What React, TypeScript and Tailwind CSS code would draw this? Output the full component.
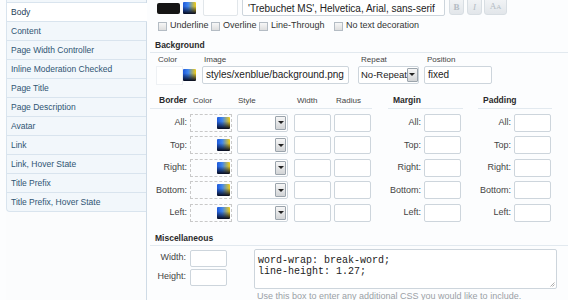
const navItems = [
  "Body",
  "Content",
  "Page Width Controller",
  "Inline Moderation Checked",
  "Page Title",
  "Page Description",
  "Avatar",
  "Link",
  "Link, Hover State",
  "Title Prefix",
  "Title Prefix, Hover State",
];

const sides = ["All:", "Top:", "Right:", "Bottom:", "Left:"];

const Picker = () => (
  <span className="block w-[13px] h-[12px] rounded-[1px] bg-[image:linear-gradient(180deg,transparent_35%,#050a1e_100%),linear-gradient(90deg,#1e58d8_0%,#3f86f0_40%,#f2cc10_100%)]" />
);

const Input = ({ className, children }: { className: string; children?: React.ReactNode }) => (
  <div
    className={`${className} h-[18px] border border-[#cdd5dc] rounded-[2px] bg-white flex items-center pl-[3px] text-[10px] text-[#222] whitespace-nowrap overflow-hidden`}
  >
    {children}
  </div>
);

const Select = ({ className, value }: { className: string; value?: string }) => (
  <div
    className={`${className} h-[18px] border border-[#cdd5dc] rounded-[2px] bg-white flex items-center justify-between pl-[2px] pr-px text-[9.5px] text-[#222] whitespace-nowrap`}
  >
    <span>{value}</span>
    <span className="shrink-0 w-[11px] h-[14px] border border-[#9ba4ac] rounded-[1px] bg-[linear-gradient(#f6f6f6,#d2d4d6)] flex items-center justify-center">
      <span className="w-0 h-0 border-l-[3px] border-r-[3px] border-t-[3px] border-l-transparent border-r-transparent border-t-[#222]" />
    </span>
  </div>
);

const Check = ({ className, label }: { className: string; label: string }) => (
  <div className={`${className} flex items-center gap-[3px]`}>
    <span className="w-[9px] h-[9px] border border-[#b4bcc4] bg-[linear-gradient(#f7f7f7,#dedede)]" />
    <span>{label}</span>
  </div>
);

const Heading = ({ children, className }: { children: React.ReactNode; className: string }) => (
  <div className={`${className} h-[15px] border-b border-[#e2e9ef] flex items-center text-[8.5px] font-bold text-[#2a2a2a]`}>
    {children}
  </div>
);

const Sidebar = () => (
  <aside className="w-[147px] shrink-0 pl-[6px] h-[300px]">
    <div className="h-full border-r border-[#cfdbe6] bg-[#fbfcfd]">
      <div className="h-[3px] border-l border-b border-[#d9e4ee] bg-[#f2f7fb]" />
      {navItems.map((item, i) => (
        <div
          key={item}
          className={
            i === 0
              ? "h-[19px] flex items-center pl-[4px] border-l border-b border-[#d9e4ee] bg-white -mr-px text-[8.5px] text-[#1e3e58]"
              : i === navItems.length - 1
                ? "h-[19px] flex items-center pl-[4px] border-l border-b border-[#d9e4ee] bg-[#f2f7fb] rounded-bl-[4px] text-[8.5px] text-[#2f5573]"
                : "h-[19px] flex items-center pl-[4px] border-l border-b border-[#d9e4ee] bg-[#f2f7fb] text-[8.5px] text-[#2f5573]"
          }
        >
          {item}
        </div>
      ))}
    </div>
  </aside>
);

export default function App() {
  return (
    <div className="w-[568px] h-[300px] overflow-hidden flex bg-[#fcfdfe] font-['Liberation_Sans',Arial,sans-serif] text-[9px] text-[#444]">
      <Sidebar />
      <main className="flex-1 flex flex-col">
        {/* font row */}
        <div className="-mt-[3px] h-[19px] flex items-start">
          <span className="ml-[10px] mt-[6px] w-[23px] h-[11px] rounded-[2px] bg-[#141414]" />
          <span className="ml-[3px] mt-[5px]">
            <Picker />
          </span>
          <div className="ml-[7px] w-[35px] h-[19px] border border-[#e1e6ea] rounded-[2px] bg-white" />
          <div className="ml-[4px] w-[203px] h-[19px] border border-[#cdd5dc] rounded-[2px] bg-white flex items-center pt-[3px] pl-[5px] text-[10px] text-[#222] whitespace-nowrap overflow-hidden">
            'Trebuchet MS', Helvetica, Arial, sans-serif
          </div>
          <div className="ml-[4px] w-[15px] h-[18px] border border-[#d8dee3] rounded-[3px] bg-[linear-gradient(#f3f5f7,#e2e6ea)] flex items-center justify-center pt-[3px] font-['Liberation_Serif',serif] font-bold text-[9px] text-[#b4bcc4]">
            B
          </div>
          <div className="ml-[3px] w-[15px] h-[18px] border border-[#d8dee3] rounded-[3px] bg-[linear-gradient(#f3f5f7,#e2e6ea)] flex items-center justify-center pt-[3px] font-['Liberation_Serif',serif] italic text-[9px] text-[#b4bcc4]">
            I
          </div>
          <div className="ml-[2px] w-[23px] h-[18px] border border-[#d8dee3] rounded-[3px] bg-[linear-gradient(#f3f5f7,#e2e6ea)] flex items-end justify-center pb-[3px] font-['Liberation_Serif',serif] text-[#b4bcc4]">
            <span className="text-[9px] leading-none">A</span>
            <span className="text-[7px] leading-none">A</span>
          </div>
        </div>

        {/* decoration row */}
        <div className="mt-[4px] h-[12px] flex items-center text-[#333]">
          <Check className="ml-[11px] w-[53px]" label="Underline" />
          <Check className="w-[48px]" label="Overline" />
          <Check className="w-[75px]" label="Line-Through" />
          <Check className="" label="No text decoration" />
        </div>

        <Heading className="mt-[7px] ml-[3px] pl-[5px]">Background</Heading>

        <div className="mt-[1px] flex items-start">
          <div className="ml-[9px] flex flex-col">
            <span className="h-[12px] flex items-center pl-[2px] text-[8px]">Color</span>
            <div className="flex items-center">
              <span className="w-[27px] h-[19px] border border-[#eef1f4] bg-white" />
              <Picker />
            </div>
          </div>
          <div className="ml-[6px] flex flex-col">
            <span className="h-[12px] flex items-center pl-[2px] text-[8px]">Image</span>
            <Input className="w-[147px]">styles/xenblue/background.png</Input>
          </div>
          <div className="ml-[9px] flex flex-col">
            <span className="h-[12px] flex items-center pl-[3px] text-[8px]">Repeat</span>
            <Select className="w-[61px]" value="No-Repeat" />
          </div>
          <div className="ml-[5px] flex flex-col">
            <span className="h-[12px] flex items-center pl-[3px] text-[8px]">Position</span>
            <Input className="w-[68px]">fixed</Input>
          </div>
        </div>

        {/* border / margin / padding */}
        <div className="mt-[9px] flex items-start">
          <div className="ml-[3px] w-[222px]">
            <Heading className="pl-[9px]">
              <span className="w-[34px]">Border</span>
              <span className="w-[45px] font-normal text-[8px] text-[#444]">Color</span>
              <span className="w-[59px] font-normal text-[8px] text-[#444]">Style</span>
              <span className="w-[39px] font-normal text-[8px] text-[#444]">Width</span>
              <span className="font-normal text-[8px] text-[#444]">Radius</span>
            </Heading>
            <div className="mt-[5px] flex flex-col gap-[4.5px]">
              {sides.map((s) => (
                <div key={s} className="h-[18px] flex items-center">
                  <span className="w-[37px] text-right">{s}</span>
                  <div className="ml-[3px] w-[42px] h-[18px] border border-dashed border-[#c9c9c9] flex items-center justify-end pr-px">
                    <Picker />
                  </div>
                  <Select className="ml-[5px] w-[51px]" />
                  <Input className="ml-[6px] w-[37px]" />
                  <Input className="ml-[3px] w-[37px]" />
                </div>
              ))}
            </div>
          </div>

          <div className="ml-[16px] w-[75px]">
            <Heading className="pl-[5px]">Margin</Heading>
            <div className="mt-[5px] flex flex-col gap-[4.5px]">
              {sides.map((s) => (
                <div key={s} className="h-[18px] flex items-center">
                  <span className="w-[33px] text-right">{s}</span>
                  <Input className="ml-[3px] w-[37px]" />
                </div>
              ))}
            </div>
          </div>

          <div className="ml-[15px] w-[74px]">
            <Heading className="pl-[5px]">Padding</Heading>
            <div className="mt-[5px] flex flex-col gap-[4.5px]">
              {sides.map((s) => (
                <div key={s} className="h-[18px] flex items-center">
                  <span className="w-[33px] text-right">{s}</span>
                  <Input className="ml-[3px] w-[37px]" />
                </div>
              ))}
            </div>
          </div>
        </div>

        <Heading className="mt-[10px] ml-[3px] pl-[5px]">Miscellaneous</Heading>

        <div className="mt-[3px] flex items-start">
          <div className="flex flex-col">
            <div className="mt-px h-[17px] flex items-center">
              <span className="w-[39px] text-right">Width:</span>
              <div className="ml-[4px] w-[37px] h-[17px] border border-[#cdd5dc] rounded-[2px] bg-white" />
            </div>
            <div className="mt-[2px] h-[17px] flex items-center">
              <span className="w-[39px] text-right">Height:</span>
              <div className="ml-[4px] w-[37px] h-[17px] border border-[#cdd5dc] rounded-[2px] bg-white" />
            </div>
          </div>
          <div className="ml-[27px] flex flex-col">
            <div className="relative w-[303px] h-[40px] border border-[#cdd5dc] rounded-[2px] bg-white pl-[3px] pt-[5px] font-['Liberation_Mono',monospace] text-[10px] leading-[11px] text-[#222]">
              <div>word-wrap: break-word;</div>
              <div>line-height: 1.27;</div>
              <svg className="absolute right-px bottom-px" width="6" height="6" viewBox="0 0 6 6">
                <path d="M5.5 1.5 L1.5 5.5 M5.5 3.5 L3.5 5.5" stroke="#999" strokeWidth="0.8" />
              </svg>
            </div>
            <span className="mt-[2px] pl-[3px] text-[9px] leading-[10px] text-[#9aa0a6] whitespace-nowrap">
              Use this box to enter any additional CSS you would like to include.
            </span>
          </div>
        </div>
      </main>
    </div>
  );
}
